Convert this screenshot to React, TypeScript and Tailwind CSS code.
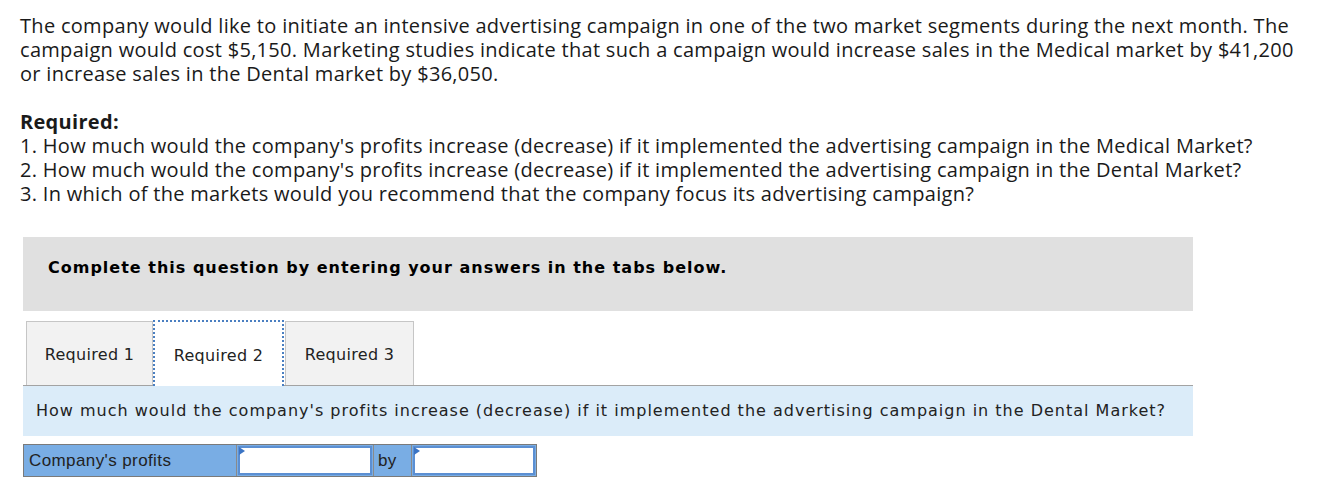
const body = "font-['Open_Sans','Liberation_Sans',sans-serif]";
const verdana = "font-['DejaVu_Sans','Verdana',sans-serif]";

function InputCell({ width }: { width: string }) {
  return (
    <div className={`relative h-full border-l border-[#8a8a8a] p-[1px] ${width}`}>
      <div className="h-full w-full border-2 border-[#5b8fd3] bg-white" />
      <span className="absolute left-[2px] top-[2px] h-0 w-0 border-y-[4px] border-l-[6px] border-y-transparent border-l-[#3b74c4]" />
    </div>
  );
}

export default function App() {
  const tabs = ["Required 1", "Required 2", "Required 3"];
  return (
    <div className="min-h-[491px] bg-white text-[#1a1a1a]">
      <div className={`${body} px-5 pt-[14px] text-[20px] leading-6 tracking-[0.3px]`}>
        <p>
          The company would like to initiate an intensive advertising campaign in one of the two market segments during the next month. The
          <br />
          campaign would cost $5,150. Marketing studies indicate that such a campaign would increase sales in the Medical market by $41,200
          <br />
          or increase sales in the Dental market by $36,050.
        </p>
        <p className="mt-6 font-bold">Required:</p>
        <p>1. How much would the company's profits increase (decrease) if it implemented the advertising campaign in the Medical Market?</p>
        <p>2. How much would the company's profits increase (decrease) if it implemented the advertising campaign in the Dental Market?</p>
        <p>3. In which of the markets would you recommend that the company focus its advertising campaign?</p>
      </div>

      <div className="ml-[23px] mt-[31px] w-[1170px]">
        <div className={`${verdana} h-[74px] bg-[#e0e0e0] pl-[25px] pt-[19px] text-[16px] font-bold leading-6 tracking-[1px] text-black`}>
          Complete this question by entering your answers in the tabs below.
        </div>

        <div className="mt-[9px] flex border-b border-[#a3a3a3] pl-[3px]">
          {tabs.map((t, i) =>
            i === 1 ? (
              <div
                key={t}
                className={`${verdana} relative -mb-px flex h-[66px] w-[131px] items-center justify-center border-2 border-b-0 border-dotted border-[#4a7fc1] bg-white pt-[3px] text-[16px] tracking-[0.3px] text-[#222]`}
              >
                {t}
              </div>
            ) : (
              <div
                key={t}
                className={`${verdana} mt-[1px] flex h-[64px] ${i === 0 ? "w-[127px]" : "ml-[1px] w-[129px]"} items-center justify-center border border-b-0 border-[#c6c6c6] bg-[#f2f2f2] pt-[3px] text-[16px] tracking-[0.3px] text-[#222]`}
              >
                {t}
              </div>
            )
          )}
        </div>

        <div className={`${verdana} flex h-[50px] items-center bg-[#dbecf9] pl-[13px] text-[16px] tracking-[1px] text-[#222]`}>
          How much would the company's profits increase (decrease) if it implemented the advertising campaign in the Dental Market?
        </div>

        <div className="mt-[8px] flex h-[33px] w-[514px] border border-[#7a7a7a] bg-[#79ade4] font-['Liberation_Sans',Arial,sans-serif] text-[17px] tracking-[0.4px] text-[#222]">
          <div className="flex w-[212px] items-center pl-[5px]">Company's profits</div>
          <InputCell width="w-[137px]" />
          <div className="flex w-[38px] items-center border-l border-[#8a8a8a] pl-[4px]">by</div>
          <InputCell width="flex-1" />
        </div>
      </div>
    </div>
  );
}
